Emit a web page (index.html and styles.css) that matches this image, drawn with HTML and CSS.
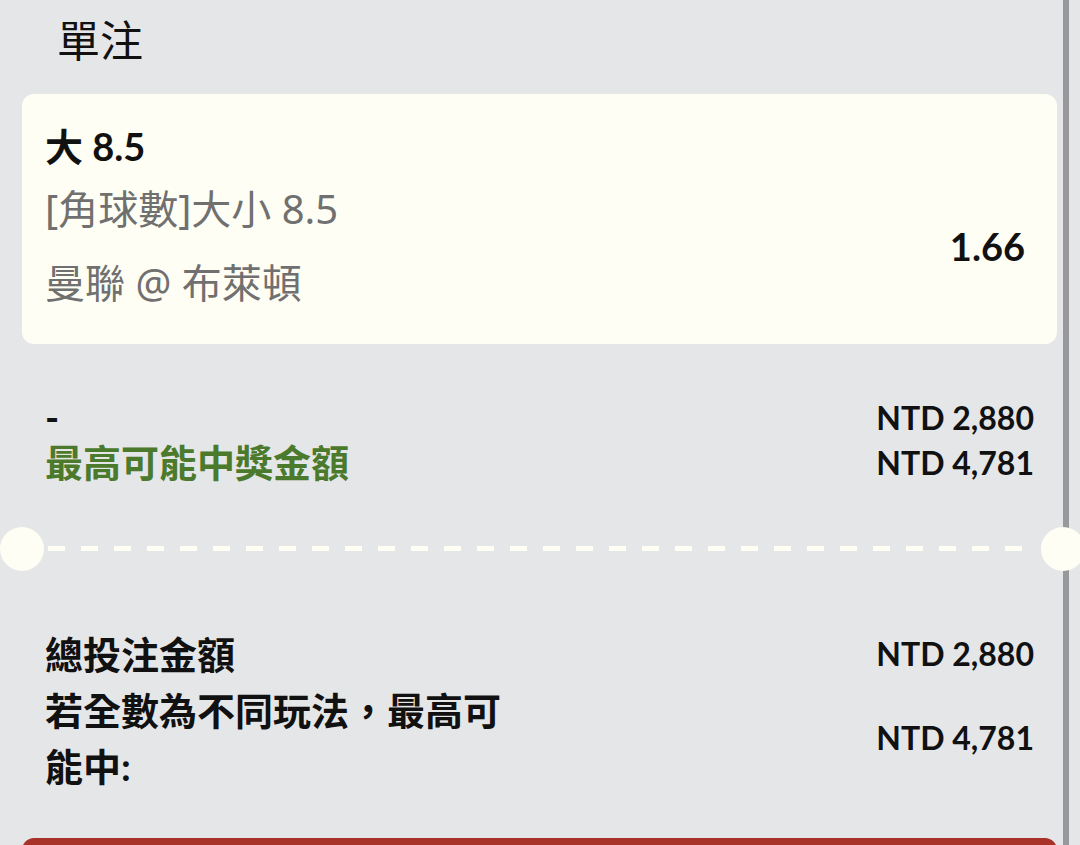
FILE: index.html
```html
<!DOCTYPE html>
<html lang="zh-Hant">
<head>
    <meta charset="UTF-8">
    <meta name="viewport" content="width=device-width, initial-scale=1.0">
    <title>單注</title>
    <link rel="stylesheet" href="styles.css">
</head>
<body>
    <div class="sheet">
        <h1 class="title">單注</h1>

        <div class="bet-card">
            <div class="selection">大 8.5</div>
            <div class="bet-row">
                <div class="bet-info">
                    <div class="market">[角球數]大小 8.5</div>
                    <div class="market">曼聯 @ 布萊頓</div>
                </div>
                <div class="odds">1.66</div>
            </div>
        </div>

        <div class="stake">
            <div class="stake-left">
                <div class="stake-line">-</div>
                <div class="stake-line win-label">最高可能中獎金額</div>
            </div>
            <div class="stake-right">
                <div class="stake-line money">NTD 2,880</div>
                <div class="stake-line money">NTD 4,781</div>
            </div>
        </div>

        <div class="divider"></div>

        <div class="summary">
            <div class="summary-row">
                <div class="label">總投注金額</div>
                <div class="money">NTD 2,880</div>
            </div>
            <div class="summary-row">
                <div class="label">若全數為不同玩法，最高可能中:</div>
                <div class="money">NTD 4,781</div>
            </div>
        </div>

        <button class="place-bet"></button>
    </div>
</body>
</html>
```

FILE: styles.css
```css
body {
    margin: 0;
    padding: 0;
    background-color: #e5e6e8;
    font-family: Lato, "Noto Sans CJK TC", sans-serif;
    color: #111;
    overflow: hidden;
}

.sheet {
    width: 1063px;
    height: 845px;
    border-right: 6px solid #98989c;
    position: relative;
}

.title {
    margin: 0;
    padding: 16px 0 0 57px;
    font-size: 43px;
    font-weight: 400;
    line-height: 50px;
}

/* Selected bet */
.bet-card {
    margin: 28px 6px 0 22px;
    padding: 27px 32px 33px 23px;
    background-color: #fefef4;
    border-radius: 12px;
}

.selection {
    font-size: 38px;
    font-weight: 700;
    line-height: 50px;
    margin-bottom: 10px;
}

.bet-row {
    display: flex;
    align-items: center;
    justify-content: space-between;
}

.market {
    font-family: "Noto Sans", "Noto Sans CJK TC", sans-serif;
    font-size: 40px;
    line-height: 56px;
    color: #707070;
}

.market + .market {
    margin-top: 18px;
}

.odds {
    font-size: 38px;
    font-weight: 700;
    line-height: 56px;
}

/* Stake block */
.stake {
    display: flex;
    justify-content: space-between;
    padding: 51px 29px 0 45px;
}

.stake-line {
    font-size: 38px;
    font-weight: 700;
    line-height: 45px;
}

.stake-right {
    text-align: right;
}

.win-label {
    color: #4b7a2c;
}

.money {
    font-size: 32px;
    font-weight: 700;
}

/* Ticket style divider */
.divider {
    position: relative;
    height: 5px;
    margin: 61px 33px 0 48px;
    background: repeating-linear-gradient(to right, #fefef4 0, #fefef4 17px, transparent 17px, transparent 33px);
}

.divider::before,
.divider::after {
    content: "";
    position: absolute;
    top: -19px;
    width: 44px;
    height: 44px;
    border-radius: 50%;
    background-color: #fefef4;
}

.divider::before {
    left: -48px;
}

.divider::after {
    right: -55px;
}

/* Totals */
.summary {
    padding: 75px 29px 0 45px;
}

.summary-row {
    display: flex;
    align-items: center;
    justify-content: space-between;
    font-size: 38px;
    font-weight: 700;
    line-height: 56px;
}

.label {
    max-width: 480px;
}

.place-bet {
    display: block;
    width: 1035px;
    height: 60px;
    margin: 44px 0 0 22px;
    border: none;
    border-radius: 12px;
    background-color: #a83228;
}
```
